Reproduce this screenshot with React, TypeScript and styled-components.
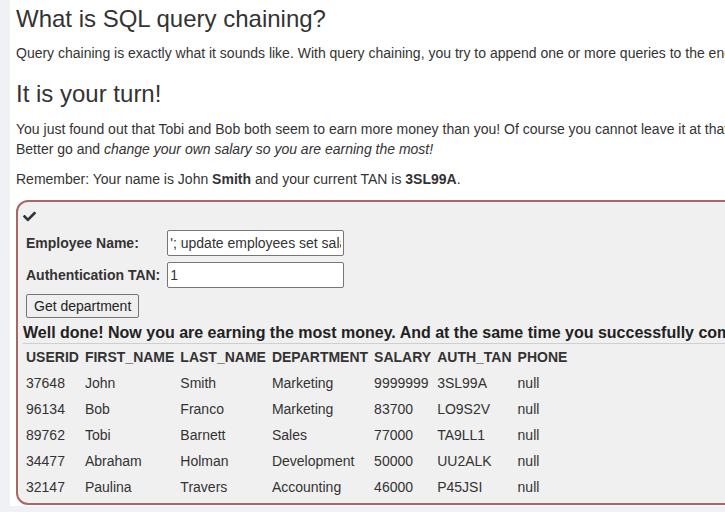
import React from 'react';
import styled, { createGlobalStyle } from 'styled-components';
import { FaCheck } from 'react-icons/fa';

const GlobalStyle = createGlobalStyle`
  html, body {
    margin: 0;
    padding: 0;
    background: #f0f1f5;
    overflow: hidden;
  }
  body {
    font-family: "Liberation Sans", Arial, sans-serif;
    font-size: 14px;
    line-height: 20px;
    color: #333;
  }
`;

const Page = styled.div`
  padding-left: 10px;
`;

const Panel = styled.div`
  width: 1200px;
  background: #fff;
  padding: 6px 0 1px 6px;
`;

const Heading = styled.h3<{ $top?: number }>`
  margin: ${({ $top }) => $top || 0}px 0 11px;
  font-size: 24px;
  font-weight: 500;
  line-height: 1.1;
  color: #333;
`;

const Paragraph = styled.p`
  margin: 0 0 10px;
  white-space: nowrap;
`;

const AttackBox = styled.div`
  width: 1000px;
  margin-top: 11px;
  border: 2px solid #aa6666;
  border-radius: 12px;
  background: #f0f0f0;
  padding: 5px 5px 2px;
`;

const CheckRow = styled.div`
  height: 19px;
  display: flex;
  align-items: center;
  color: #333;
`;

const FormTable = styled.table`
  border-spacing: 2px;
  td {
    padding: 2px 1px;
  }
`;

const LabelCell = styled.td`
  && {
    padding-right: 4px;
  }
`;

const Label = styled.label`
  font-weight: bold;
  display: inline-block;
  white-space: nowrap;
`;

const TextInput = styled.input`
  box-sizing: border-box;
  width: 177px;
  height: 26px;
  margin: 0;
  padding: 1px 2px;
  border: 1px solid #767676;
  border-radius: 2px;
  background: #fff;
  font-family: "Liberation Sans", Arial, sans-serif;
  font-size: 14px;
  color: #333;
  display: block;
`;

const Button = styled.button`
  box-sizing: border-box;
  height: 24px;
  margin: 0;
  padding: 1px 7px;
  border: 1px solid #767676;
  border-radius: 2px;
  background: #efefef;
  font-family: "Liberation Sans", Arial, sans-serif;
  font-size: 14px;
  color: #222;
  display: block;
`;

const Feedback = styled.div`
  margin-top: 1px;
  font-size: 16px;
  font-weight: bold;
  line-height: 20px;
  color: #222;
  white-space: nowrap;
  border-bottom: 1px solid #cfcfcf;
`;

const ResultTable = styled.table`
  border-spacing: 2px;
  margin-top: -1px;
  th, td {
    padding: 2px 3px 2px 1px;
    text-align: left;
    white-space: nowrap;
  }
  th {
    font-weight: bold;
  }
`;

const columns = ['USERID', 'FIRST_NAME', 'LAST_NAME', 'DEPARTMENT', 'SALARY', 'AUTH_TAN', 'PHONE'];

const rows = [
  ['37648', 'John', 'Smith', 'Marketing', '9999999', '3SL99A', 'null'],
  ['96134', 'Bob', 'Franco', 'Marketing', '83700', 'LO9S2V', 'null'],
  ['89762', 'Tobi', 'Barnett', 'Sales', '77000', 'TA9LL1', 'null'],
  ['34477', 'Abraham', 'Holman', 'Development', '50000', 'UU2ALK', 'null'],
  ['32147', 'Paulina', 'Travers', 'Accounting', '46000', 'P45JSI', 'null'],
];

const App: React.FC = () => {
  return (
    <Page>
      <GlobalStyle />
      <Panel>
        <Heading>What is SQL query chaining?</Heading>
        <Paragraph>
          Query chaining is exactly what it sounds like. With query chaining, you try to append one or more queries to the end of the actual query. You can do this by using the ; metacharacter.
        </Paragraph>
        <Heading $top={18}>It is your turn!</Heading>
        <Paragraph>
          You just found out that Tobi and Bob both seem to earn more money than you! Of course you cannot leave it at that.
          <br />
          Better go and <i>change your own salary so you are earning the most!</i>
        </Paragraph>
        <Paragraph>
          Remember: Your name is John <b>Smith</b> and your current TAN is <b>3SL99A</b>.
        </Paragraph>
        <AttackBox>
          <CheckRow>
            <FaCheck size={13} />
          </CheckRow>
          <form onSubmit={(e) => e.preventDefault()}>
            <FormTable>
              <tbody>
                <tr>
                  <LabelCell>
                    <Label>Employee Name:</Label>
                  </LabelCell>
                  <td>
                    <TextInput
                      type="text"
                      readOnly
                      value="'; update employees set salary=9999999 where last_name='Smith"
                    />
                  </td>
                </tr>
                <tr>
                  <LabelCell>
                    <Label>Authentication TAN:</Label>
                  </LabelCell>
                  <td>
                    <TextInput type="text" readOnly value="1" />
                  </td>
                </tr>
                <tr>
                  <td>
                    <Button type="submit">Get department</Button>
                  </td>
                </tr>
              </tbody>
            </FormTable>
          </form>
          <Feedback>
            Well done! Now you are earning the most money. And at the same time you successfully compromised the integrity of data by changing the salary!
          </Feedback>
          <ResultTable>
            <tbody>
              <tr>
                {columns.map((c) => (
                  <th key={c}>{c}</th>
                ))}
              </tr>
              {rows.map((r) => (
                <tr key={r[0]}>
                  {r.map((cell, i) => (
                    <td key={i}>{cell}</td>
                  ))}
                </tr>
              ))}
            </tbody>
          </ResultTable>
        </AttackBox>
      </Panel>
    </Page>
  );
};

export default App;
